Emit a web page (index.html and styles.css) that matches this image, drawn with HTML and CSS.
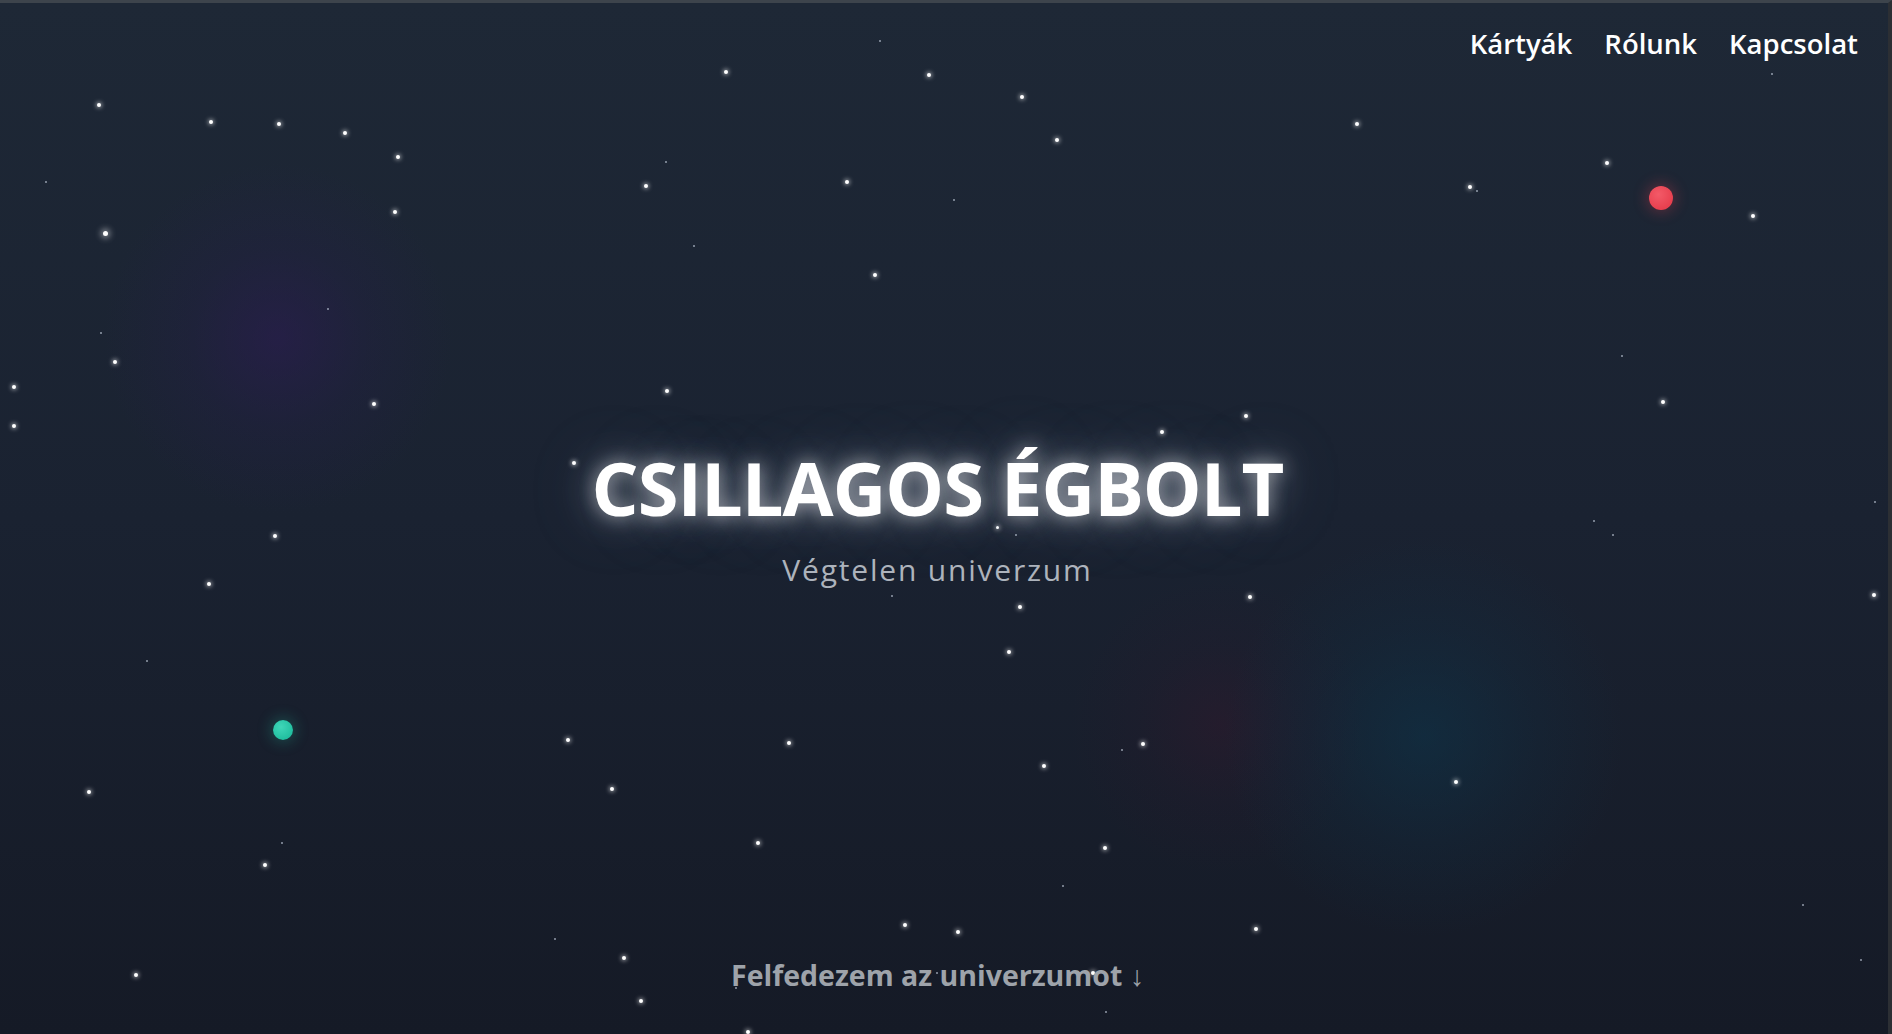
FILE: index.html
```html
<!DOCTYPE html>
<html lang="hu">
<head>
<meta charset="utf-8">
<title>Csillagos égbolt</title>
<link rel="stylesheet" href="styles.css">
</head>
<body>
<div class="page">
  <div class="sky" aria-hidden="true">
    <span class="star" style="left:99px;top:105px"></span>
    <span class="star" style="left:211px;top:122px"></span>
    <span class="star" style="left:279px;top:124px"></span>
    <span class="star" style="left:345px;top:133px"></span>
    <span class="star" style="left:398px;top:157px"></span>
    <span class="star big" style="left:105px;top:233px"></span>
    <span class="star" style="left:395px;top:212px"></span>
    <span class="star" style="left:726px;top:72px"></span>
    <span class="star" style="left:929px;top:75px"></span>
    <span class="star" style="left:1022px;top:97px"></span>
    <span class="star" style="left:1057px;top:140px"></span>
    <span class="star tiny" style="left:880px;top:41px"></span>
    <span class="star" style="left:646px;top:186px"></span>
    <span class="star" style="left:847px;top:182px"></span>
    <span class="star tiny" style="left:666px;top:162px"></span>
    <span class="star tiny" style="left:954px;top:200px"></span>
    <span class="star tiny" style="left:694px;top:246px"></span>
    <span class="star" style="left:875px;top:275px"></span>
    <span class="star" style="left:1357px;top:124px"></span>
    <span class="star" style="left:1470px;top:187px"></span>
    <span class="star tiny" style="left:1477px;top:191px"></span>
    <span class="star" style="left:1607px;top:163px"></span>
    <span class="star" style="left:1753px;top:216px"></span>
    <span class="star tiny" style="left:1772px;top:74px"></span>
    <span class="star tiny" style="left:46px;top:182px"></span>
    <span class="star tiny" style="left:101px;top:333px"></span>
    <span class="star" style="left:115px;top:362px"></span>
    <span class="star" style="left:14px;top:387px"></span>
    <span class="star" style="left:14px;top:426px"></span>
    <span class="star tiny" style="left:328px;top:309px"></span>
    <span class="star" style="left:374px;top:404px"></span>
    <span class="star" style="left:667px;top:391px"></span>
    <span class="star" style="left:1162px;top:432px"></span>
    <span class="star" style="left:1246px;top:416px"></span>
    <span class="star" style="left:1663px;top:402px"></span>
    <span class="star tiny" style="left:1622px;top:356px"></span>
    <span class="star" style="left:574px;top:463px"></span>
    <span class="star tiny" style="left:1875px;top:502px"></span>
    <span class="star" style="left:275px;top:536px"></span>
    <span class="star" style="left:209px;top:584px"></span>
    <span class="star small" style="left:998px;top:528px"></span>
    <span class="star tiny" style="left:1016px;top:535px"></span>
    <span class="star tiny" style="left:841px;top:562px"></span>
    <span class="star tiny" style="left:892px;top:596px"></span>
    <span class="star" style="left:1020px;top:607px"></span>
    <span class="star" style="left:1250px;top:597px"></span>
    <span class="star tiny" style="left:1594px;top:521px"></span>
    <span class="star tiny" style="left:1613px;top:535px"></span>
    <span class="star" style="left:1874px;top:595px"></span>
    <span class="star" style="left:1009px;top:652px"></span>
    <span class="star tiny" style="left:147px;top:661px"></span>
    <span class="star" style="left:568px;top:740px"></span>
    <span class="star" style="left:789px;top:743px"></span>
    <span class="star" style="left:1044px;top:766px"></span>
    <span class="star" style="left:1143px;top:744px"></span>
    <span class="star tiny" style="left:1122px;top:750px"></span>
    <span class="star" style="left:89px;top:792px"></span>
    <span class="star" style="left:612px;top:789px"></span>
    <span class="star" style="left:1456px;top:782px"></span>
    <span class="star tiny" style="left:282px;top:843px"></span>
    <span class="star" style="left:758px;top:843px"></span>
    <span class="star" style="left:1105px;top:848px"></span>
    <span class="star" style="left:265px;top:865px"></span>
    <span class="star tiny" style="left:1063px;top:886px"></span>
    <span class="star tiny" style="left:1803px;top:905px"></span>
    <span class="star" style="left:905px;top:925px"></span>
    <span class="star" style="left:958px;top:932px"></span>
    <span class="star" style="left:1256px;top:929px"></span>
    <span class="star tiny" style="left:555px;top:939px"></span>
    <span class="star" style="left:624px;top:958px"></span>
    <span class="star" style="left:136px;top:975px"></span>
    <span class="star" style="left:641px;top:1001px"></span>
    <span class="star tiny" style="left:1861px;top:960px"></span>
    <span class="star tiny" style="left:1106px;top:1012px"></span>
    <span class="star" style="left:748px;top:1032px"></span>
    <span class="star" style="left:1093px;top:973px"></span>
    <span class="star tiny" style="left:937px;top:973px"></span>
    <span class="star tiny" style="left:736px;top:988px"></span>
    <span class="planet red" style="left:1661px;top:198px"></span>
    <span class="planet teal" style="left:283px;top:730px"></span>
  </div>

  <header class="nav">
    <a class="nav-link" href="#kartyak">Kártyák</a>
    <a class="nav-link" href="#rolunk">Rólunk</a>
    <a class="nav-link" href="#kapcsolat">Kapcsolat</a>
  </header>

  <main class="hero">
    <h1 class="title">CSILLAGOS ÉGBOLT</h1>
    <p class="subtitle">Végtelen univerzum</p>
  </main>

  <footer class="cta-wrap">
    <a class="cta" href="#kartyak">Felfedezem az univerzumot ↓</a>
  </footer>
</div>
</body>
</html>
```

FILE: styles.css
```css
html, body {
  margin: 0;
  padding: 0;
  height: 100%;
}

body {
  background: #1a2130;
  border-top: 3px solid #3d444c;
  border-right: 4px solid #2c2f34;
  box-sizing: border-box;
  font-family: "Open Sans", "Noto Sans", sans-serif;
  overflow: hidden;
}

.page {
  position: relative;
  height: 100%;
  display: flex;
  flex-direction: column;
  padding-right: 13px;
  box-sizing: border-box;
  background:
    radial-gradient(circle at 278px 335px, rgba(46, 26, 88, 0.5) 0, rgba(40, 28, 80, 0.22) 90px, rgba(30, 30, 60, 0) 175px),
    radial-gradient(circle at 1424px 733px, rgba(10, 60, 85, 0.42) 0, rgba(12, 55, 80, 0.18) 110px, rgba(10, 40, 60, 0) 200px),
    radial-gradient(circle at 1220px 722px, rgba(70, 20, 45, 0.26) 0, rgba(60, 20, 45, 0.1) 80px, rgba(50, 20, 40, 0) 150px),
    linear-gradient(180deg, #1e2836 0%, #1a2231 50%, #151a26 100%);
}

.sky {
  position: absolute;
  top: -3px;
  left: 0;
  right: 0;
  bottom: 0;
  overflow: hidden;
  pointer-events: none;
}

.star {
  position: absolute;
  width: 4px;
  height: 4px;
  margin: -2px 0 0 -2px;
  border-radius: 50%;
  background: #ffffff;
  box-shadow: 0 0 4px 1px rgba(255, 255, 255, 0.55);
}

.star.big {
  width: 5px;
  height: 5px;
  box-shadow: 0 0 6px 2px rgba(255, 255, 255, 0.5);
}

.star.small {
  width: 3px;
  height: 3px;
}

.star.tiny {
  width: 2px;
  height: 2px;
  margin: -1px 0 0 -1px;
  background: rgba(200, 210, 225, 0.7);
  box-shadow: none;
}

.planet {
  position: absolute;
  border-radius: 50%;
}

.planet.red {
  width: 24px;
  height: 24px;
  margin: -12px 0 0 -12px;
  background: radial-gradient(circle at 40% 35%, #f35a68, #e8404f 70%);
  box-shadow: 0 0 14px 3px rgba(232, 64, 79, 0.28);
}

.planet.teal {
  width: 20px;
  height: 20px;
  margin: -10px 0 0 -10px;
  background: radial-gradient(circle at 40% 35%, #3fd6b8, #22bfa0 70%);
  box-shadow: 0 0 14px 3px rgba(34, 191, 160, 0.25);
}

.nav {
  position: relative;
  display: flex;
  justify-content: flex-end;
  gap: 32px;
  padding: 27px 17px 0 0;
}

.nav-link {
  color: #ffffff;
  text-decoration: none;
  font-size: 27.5px;
  font-weight: 600;
  line-height: 1;
}

.hero {
  position: relative;
  flex: 1;
  display: flex;
  flex-direction: column;
  align-items: center;
  justify-content: center;
  padding-top: 18px;
}

.title {
  margin: 0;
  color: #ffffff;
  font-size: 74px;
  font-weight: 700;
  line-height: 1;
  letter-spacing: -1px;
  text-shadow:
    0 0 18px rgba(255, 255, 255, 0.55),
    0 0 38px rgba(215, 226, 242, 0.42),
    0 0 72px rgba(185, 205, 228, 0.26);
}

.subtitle {
  margin: 30px 0 0;
  color: #adb3bc;
  font-size: 30px;
  font-weight: 400;
  line-height: 1;
  letter-spacing: 1.8px;
}

.cta-wrap {
  position: relative;
  display: flex;
  justify-content: center;
  padding-bottom: 45px;
}

.cta {
  color: #9ea3aa;
  text-decoration: none;
  font-size: 28.5px;
  font-weight: 700;
  line-height: 1;
}
```
